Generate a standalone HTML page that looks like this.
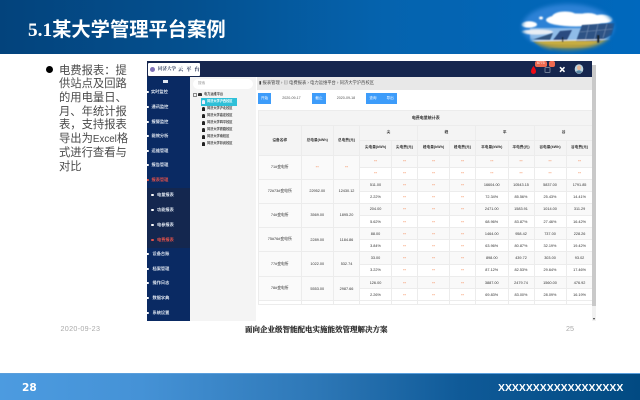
<!DOCTYPE html>
<html lang="zh"><head><meta charset="utf-8"><title>5.1某大学管理平台案例</title>
<style>
*{box-sizing:border-box}
html,body{margin:0;padding:0;width:640px;height:400px;overflow:hidden;background:#fff}
body{position:relative;font-family:"Liberation Sans","Noto Sans CJK SC",sans-serif}
.a{position:absolute;white-space:nowrap}
#hd{left:0;top:0;width:640px;height:53.5px;background:linear-gradient(90deg,#03437c 0,#04508f 30%,#0563ae 60%,#0068bd 100%)}
#title{left:28px;top:18px;font:bold 19.3px/26px "Liberation Serif","Noto Sans CJK SC",sans-serif;color:#fff}
#body{left:59px;top:64.5px;width:70px;font-size:11.3px;line-height:13.72px;color:#4a4a4a;white-space:normal}
#body div{white-space:nowrap}
#body span{font-size:9.8px}
#bul{left:45.5px;top:65.5px;width:7px;height:7px;border-radius:50%;background:#000}
#shot{left:147px;top:61px;width:449px;height:260px;background:#fff;filter:blur(.3px);overflow:hidden}
#shot .a{line-height:1}
#top{left:0;top:0;width:445px;height:15.5px;background:#16264e}
#logo{left:1px;top:1.5px;width:52px;height:13.5px;background:#fff;border-radius:1px}
#side{left:0;top:15.5px;width:42.5px;height:245px;background:#0a2a63}
#sub{left:0;top:111.5px;width:42.5px;height:60px;background:#14274f;position:absolute}
.m{font-size:4.2px;color:#dfe6f0;font-weight:bold}
.r{color:#e5524a}
.dot{width:2.6px;height:2.6px;border-radius:50%;background:#fff;margin-left:-1px}
#tree{left:43px;top:15.5px;width:66px;height:245px;background:#f4f4f4}
#search{left:3px;top:2.5px;width:60px;height:9.5px;background:#fff;border-radius:5px;font-size:3.6px;color:#999;padding:3px 0 0 5px;position:absolute}
.t{font-size:3.2px;color:#444;font-weight:bold}
.p{width:3px;height:4.6px;background:#222;border-radius:1.4px 1.4px 0 0}
#bc{left:110px;top:15.5px;width:335px;height:13px;background:#e8e8e8;font-size:4.3px;color:#444;padding-top:4.5px;padding-left:2px}
.b{background:#3d9cfa;color:#fff;font-size:3.6px;text-align:center;padding-top:3.7px;height:11px}
.i{background:#fff;font-size:3.6px;color:#555;text-align:center;padding-top:3.7px;height:11px}
table{position:absolute;left:111px;top:49px;width:334px;border-collapse:collapse;table-layout:fixed;font-size:3.8px;color:#333;text-align:center;background:#fff}
td,th{border:.5px solid #ececec;padding:0;overflow:hidden;white-space:nowrap;font-weight:normal}
th{background:#f4f4f4;font-weight:bold;color:#333;font-size:3.7px}
.o{color:#f59a6e;font-weight:bold;font-size:5px}
tr.x td{background:#f9f9f9}
td.g{background:#fafafa!important}
#sb{left:445px;top:4px;width:4px;height:256px;background:#f1f1f1}
#th{left:0;top:0;width:4px;height:241px;background:#c9c9c9;position:absolute}
.f{top:323px;font-size:7.2px;color:#aaa;line-height:12px}
#fc{left:245px;top:323.5px;font:bold 7.5px/12px "Liberation Serif","Noto Serif CJK SC",serif;color:#2a2a2a;-webkit-text-stroke:.2px #2a2a2a}
#ft{left:0;top:373px;width:640px;height:27px;background:linear-gradient(90deg,#4c9be0 0,#4592d6 22%,#2d77b6 50%,#0f5a98 72%,#014a82 100%);border-top:1px solid #5b9fdc}
#n{left:22px;top:381px;color:#fff;font:bold 10.6px/15px "DejaVu Sans",sans-serif}
#xx{left:498px;top:381px;color:#fff;font:bold 10.45px/15px "Liberation Sans",sans-serif}
</style></head><body>
<div class="a" id="hd"></div>
<svg class="a" style="left:510px;top:0" width="115" height="54" viewBox="0 0 115 54">
<defs>
<filter id="fe" x="-20%" y="-20%" width="140%" height="140%"><feGaussianBlur stdDeviation="2"/></filter>
<filter id="sm"><feGaussianBlur stdDeviation=".9"/></filter>
<filter id="ss"><feGaussianBlur stdDeviation=".4"/></filter>
<mask id="m"><ellipse cx="58" cy="27" rx="46" ry="23" fill="#fff" filter="url(#fe)"/></mask>
</defs>
<g mask="url(#m)">
<rect x="0" y="0" width="115" height="54" fill="#2d82d6"/>
<rect x="20" y="28" width="80" height="14" fill="#8fbce8" filter="url(#sm)"/>
<g filter="url(#sm)" fill="#fff">
<ellipse cx="66" cy="20" rx="30" ry="6.5"/><ellipse cx="55" cy="17" rx="13" ry="5.5"/><ellipse cx="78" cy="17" rx="10" ry="4"/><ellipse cx="92" cy="19" rx="11" ry="4.5"/>
<ellipse cx="19" cy="24.5" rx="8" ry="3.2"/><ellipse cx="27" cy="32" rx="16" ry="2.6" fill="#e9eef4"/>
<ellipse cx="31" cy="18" rx="2" ry="1.5"/>
</g>
<g filter="url(#ss)">
<path d="M22 41 L104 40 L90 52 L36 52Z" fill="#b9a23e"/>
<path d="M24 41 L100 40 L90 45 L30 44Z" fill="#c7ad40"/>
<path d="M40 48 H84 L78 54 H46Z" fill="#7a8a5a"/>
<path d="M23 39.5 L43 33 L40 40 Z" fill="#33547f"/>
<path d="M50 31 L62 30 L57 40 L43 40 Z" fill="#2c4c80"/>
<path d="M72 25 L105 23 L102 35 L90 41 L66 41 Z" fill="#2d5285"/>
<path d="M79 25L75 41M88 24.5L84 41M97 24L93 38M70 32L103 29" stroke="#6f8cb2" stroke-width=".6" fill="none"/>
<path d="M22 41 L100 39.5" stroke="#e3e8ee" stroke-width="1.1"/>
<rect x="87" y="35" width="2.4" height="8" fill="#14202c"/>
<rect x="52" y="37" width="1.2" height="5" fill="#14202c"/>
</g>
</g></svg>
<div class="a" id="title">5.1某大学管理平台案例</div>
<div class="a" id="bul"></div>
<div class="a" id="body"><div>电费报表：提</div><div>供站点及回路</div><div>的用电量日、</div><div>月、年统计报</div><div>表，支持报表</div><div>导出为<span>Excel</span>格</div><div>式进行查看与</div><div>对比</div></div>

<div class="a" id="shot">
<div class="a" id="top"></div>
<div class="a" id="logo"></div>
<div class="a" style="left:3px;top:6px;width:5px;height:5px;border-radius:50%;background:#7f72b8"></div>
<div class="a" style="left:11px;top:6px;font:bold 4.5px/1 'Noto Serif CJK SC',serif;color:#1c2b4f">同济大学</div>
<div class="a" style="left:31px;top:5.5px;font:bold 5.2px/1 'Noto Serif CJK SC',serif;color:#1c2b4f;letter-spacing:3px">云平台</div>
<svg class="a" style="left:383px;top:0" width="62" height="15" viewBox="0 0 62 15">
<path d="M3.5 5 C5 7 6 8.5 6 10.5 A2.5 2.5 0 0 1 1 10.5 C1 8.5 2 7 3.5 5Z" fill="#f00a14"/>
<rect x="15" y="6.5" width="5" height="5" rx=".6" fill="none" stroke="#6d7a93" stroke-width="1"/>
<rect x="5" y="0" width="12" height="6" rx="2" fill="#ee6a50"/>
<rect x="19" y="0" width="6" height="6" rx="2" fill="#ee6a50"/>
<path d="M30 6.2 L34.5 10.8 M34.5 6.2 L30 10.8" stroke="#fff" stroke-width="1.5"/>
<ellipse cx="49" cy="8" rx="4.3" ry="4.8" fill="#bcd3de"/><ellipse cx="49" cy="6.8" rx="2" ry="2.3" fill="#e9b799"/><path d="M45.7 11 Q49 7.5 52.3 11 Q49 13.5 45.7 11Z" fill="#5a87a5"/>
</svg>
<div class="a" style="left:390px;top:1.4px;font-size:3.4px;color:#fff">6773</div>

<div class="a" id="side">
<div id="sub"></div>
<div class="a" style="left:16px;top:3px;width:5px;height:3.6px;background:#dfe6f0"></div>
<div class="a dot" style="left:0;top:14px"></div><div class="a m" style="left:4px;top:13.5px">实时监控</div>
<div class="a dot" style="left:0;top:29px"></div><div class="a m" style="left:4.5px;top:28.5px">通讯监控</div>
<div class="a dot" style="left:0;top:44px"></div><div class="a m" style="left:4.5px;top:43.5px">报警监控</div>
<div class="a dot" style="left:0;top:58px"></div><div class="a m" style="left:4.5px;top:57.5px">能效分析</div>
<div class="a dot" style="left:0;top:73px"></div><div class="a m" style="left:4.5px;top:72.5px">运维管理</div>
<div class="a dot" style="left:0;top:87px"></div><div class="a m" style="left:4.5px;top:86.5px">报告管理</div>
<div class="a dot" style="left:0;top:102px;background:#e5524a"></div><div class="a m r" style="left:4.5px;top:101.5px">报表管理</div>
<div class="a dot" style="left:5px;top:117px"></div><div class="a m" style="left:10px;top:116.5px">电量报表</div>
<div class="a dot" style="left:5px;top:132px"></div><div class="a m" style="left:10px;top:131.5px">功能报表</div>
<div class="a dot" style="left:5px;top:147px"></div><div class="a m" style="left:10px;top:146.5px">电参报表</div>
<div class="a dot" style="left:5px;top:162px;background:#e5524a"></div><div class="a m r" style="left:10px;top:161.5px">电费报表</div>
<div class="a dot" style="left:0;top:176px"></div><div class="a m" style="left:5.5px;top:175.5px">设备台账</div>
<div class="a dot" style="left:0;top:191px"></div><div class="a m" style="left:5.5px;top:190.5px">档案管理</div>
<div class="a dot" style="left:0;top:205px"></div><div class="a m" style="left:5.5px;top:204.5px">操作日志</div>
<div class="a dot" style="left:0;top:220px"></div><div class="a m" style="left:5.5px;top:219.5px">数据字典</div>
<div class="a dot" style="left:0;top:235px"></div><div class="a m" style="left:5.5px;top:234.5px">系统设置</div>
</div>

<div class="a" id="tree">
<div id="search">搜索</div>
<div class="a" style="left:3px;top:16px;width:4px;height:4px;border:.5px solid #888"></div>
<div class="a" style="left:8px;top:16.5px;width:4px;height:3px;background:#333;border-radius:1px 1px 0 0"></div>
<div class="a t" style="left:14px;top:16.5px">电力运维平台</div>
<div class="a" style="left:11px;top:21.5px;width:36px;height:7.5px;background:#2fc0d8"></div>
<div class="a p" style="left:12px;top:23px;background:#eef"></div><div class="a t" style="left:17px;top:23.6px;color:#fff">同济大学沪西校区</div>
<div class="a p" style="left:12px;top:30px"></div><div class="a t" style="left:17px;top:30.6px">同济大学沪北校区</div>
<div class="a p" style="left:12px;top:37px"></div><div class="a t" style="left:17px;top:37.6px">同济大学嘉定校区</div>
<div class="a p" style="left:12px;top:44px"></div><div class="a t" style="left:17px;top:44.6px">同济大学四平校区</div>
<div class="a p" style="left:12px;top:51px"></div><div class="a t" style="left:17px;top:51.6px">同济大学铁路校区</div>
<div class="a p" style="left:12px;top:58px"></div><div class="a t" style="left:17px;top:58.6px">同济大学南校区</div>
<div class="a p" style="left:12px;top:65px"></div><div class="a t" style="left:17px;top:65.6px">同济大学彰武校区</div>
</div>

<div class="a" id="bc">▮ 报表管理 › ▤ 电费报表 › 电力运维平台 › 同济大学沪西校区</div>
<div class="a b" style="left:111px;top:32px;width:13px">开始</div>
<div class="a i" style="left:124px;top:32px;width:41px">2020-09-17</div>
<div class="a b" style="left:165px;top:32px;width:14px">截止</div>
<div class="a i" style="left:179px;top:32px;width:40px">2020-09-18</div>
<div class="a b" style="left:219px;top:32px;width:31px;word-spacing:9px">查询 导出</div>

<table>
<colgroup><col style="width:42.5px"><col style="width:32.5px"><col style="width:26px"><col style="width:32px"><col style="width:26px"><col style="width:32px"><col style="width:26px"><col style="width:32.5px"><col style="width:26px"><col style="width:32px"><col style="width:27px"></colgroup>
<tr style="height:15px"><th colspan="11" style="font-size:4px">电费电量统计表</th></tr>
<tr style="height:14.7px"><th rowspan="2">设备名称</th><th rowspan="2">总电量(kWh)</th><th rowspan="2">总电费(元)</th><th colspan="2">尖</th><th colspan="2">峰</th><th colspan="2">平</th><th colspan="2">谷</th></tr>
<tr style="height:15px"><th>尖电量(kWh)</th><th>尖电费(元)</th><th>峰电量(kWh)</th><th>峰电费(元)</th><th>平电量(kWh)</th><th>平电费(元)</th><th>谷电量(kWh)</th><th>谷电费(元)</th></tr>
<tr class="x" style="height:12px"><td class="g" rowspan="2">71#变电所</td><td class="g o" rowspan="2">--</td><td class="g o" rowspan="2">--</td><td class="o">--</td><td class="o">--</td><td class="o">--</td><td class="o">--</td><td class="o">--</td><td class="o">--</td><td class="o">--</td><td class="o">--</td></tr>
<tr style="height:12px"><td class="o">--</td><td class="o">--</td><td class="o">--</td><td class="o">--</td><td class="o">--</td><td class="o">--</td><td class="o">--</td><td class="o">--</td></tr>
<tr class="x" style="height:12px"><td class="g" rowspan="2">72#73#变电所</td><td class="g" rowspan="2">22952.00</td><td class="g" rowspan="2">12430.12</td><td>511.00</td><td class="o">--</td><td class="o">--</td><td class="o">--</td><td>16604.00</td><td>10543.15</td><td>5837.00</td><td>1791.85</td></tr>
<tr style="height:12px"><td>2.22%</td><td class="o">--</td><td class="o">--</td><td class="o">--</td><td>72.34%</td><td>85.56%</td><td>25.43%</td><td>14.41%</td></tr>
<tr class="x" style="height:12.5px"><td class="g" rowspan="2">74#变电所</td><td class="g" rowspan="2">3569.00</td><td class="g" rowspan="2">1895.20</td><td>204.00</td><td class="o">--</td><td class="o">--</td><td class="o">--</td><td>2471.00</td><td>1583.91</td><td>1014.00</td><td>311.29</td></tr>
<tr style="height:12px"><td>5.62%</td><td class="o">--</td><td class="o">--</td><td class="o">--</td><td>68.96%</td><td>83.87%</td><td>27.46%</td><td>16.42%</td></tr>
<tr class="x" style="height:12.3px"><td class="g" rowspan="2">75#76#变电所</td><td class="g" rowspan="2">2289.00</td><td class="g" rowspan="2">1184.86</td><td>88.00</td><td class="o">--</td><td class="o">--</td><td class="o">--</td><td>1464.00</td><td>958.42</td><td>737.00</td><td>228.26</td></tr>
<tr style="height:12px"><td>3.84%</td><td class="o">--</td><td class="o">--</td><td class="o">--</td><td>63.96%</td><td>80.87%</td><td>32.19%</td><td>19.42%</td></tr>
<tr class="x" style="height:12.5px"><td class="g" rowspan="2">77#变电所</td><td class="g" rowspan="2">1022.00</td><td class="g" rowspan="2">532.74</td><td>33.00</td><td class="o">--</td><td class="o">--</td><td class="o">--</td><td>898.00</td><td>439.72</td><td>303.00</td><td>93.02</td></tr>
<tr style="height:12px"><td>3.22%</td><td class="o">--</td><td class="o">--</td><td class="o">--</td><td>87.12%</td><td>82.53%</td><td>29.64%</td><td>17.46%</td></tr>
<tr class="x" style="height:12.3px"><td class="g" rowspan="2">78#变电所</td><td class="g" rowspan="2">5553.00</td><td class="g" rowspan="2">2987.66</td><td>126.00</td><td class="o">--</td><td class="o">--</td><td class="o">--</td><td>3887.00</td><td>2479.74</td><td>1560.00</td><td>476.92</td></tr>
<tr style="height:12px"><td>2.26%</td><td class="o">--</td><td class="o">--</td><td class="o">--</td><td>69.83%</td><td>83.00%</td><td>28.09%</td><td>16.19%</td></tr>
<tr style="height:3.5px"><td></td><td></td><td></td><td></td><td></td><td></td><td></td><td></td><td></td><td></td><td></td></tr>
</table>
<div class="a" id="sb"><div id="th"></div></div>
<div class="a" style="left:445.5px;top:257px;width:0;height:0;border-left:1.5px solid transparent;border-right:1.5px solid transparent;border-top:2px solid #333"></div>
</div>

<div class="a f" style="left:60.5px;letter-spacing:.3px">2020-09-23</div>
<div class="a" id="fc">面向企业级智能配电实施能效管理解决方案</div>
<div class="a f" style="left:566px">25</div>
<div class="a" id="ft"></div>
<div class="a" id="n">28</div>
<div class="a" id="xx">XXXXXXXXXXXXXXXXXX</div>
</body></html>
